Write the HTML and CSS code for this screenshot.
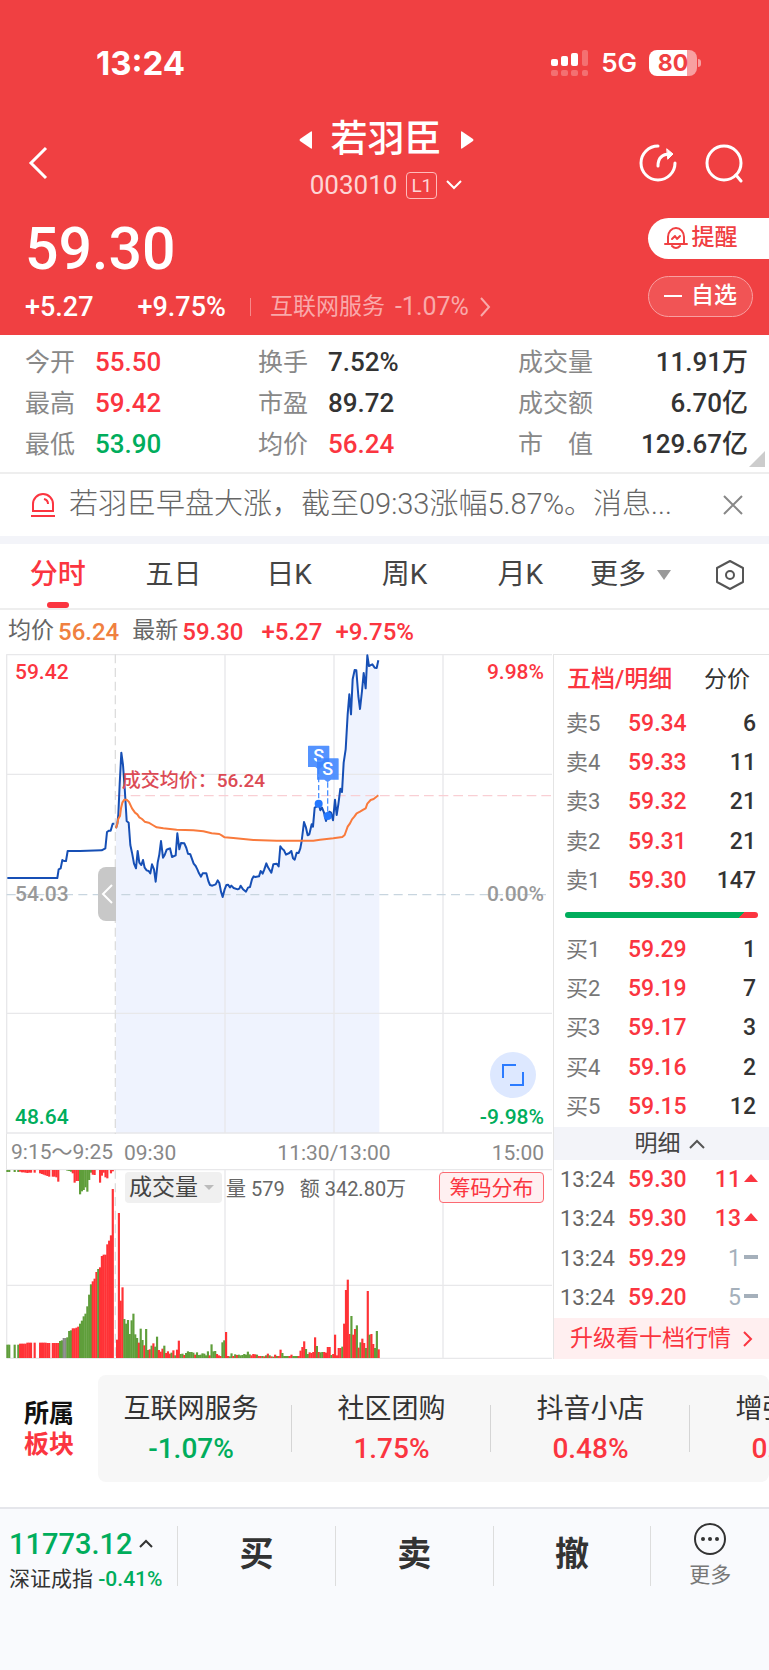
FILE: index.html
```html
<!DOCTYPE html>
<html lang="zh-CN">
<head>
    <meta charset="UTF-8">
    <meta name="viewport" content="width=device-width, initial-scale=1.0">
    <title>若羽臣 003010</title>
    <link rel="stylesheet" href="styles.css">
</head>
<body>
    <header class="header">
        <div class="status">
            <span class="clock">13:24</span>
            <div class="status_right">
                <svg width="38" height="26" viewBox="0 0 38 26" fill="#fff">
                    <rect x="0" y="9" width="7" height="7" rx="2"/>
                    <rect x="10" y="6" width="7" height="10" rx="2"/>
                    <rect x="20" y="3" width="7" height="13" rx="2"/>
                    <rect x="31" y="0" width="6" height="16" rx="2" opacity=".25"/>
                    <g opacity=".25">
                        <rect x="0" y="20" width="7" height="6" rx="2"/>
                        <rect x="10" y="20" width="7" height="6" rx="2"/>
                        <rect x="20" y="20" width="7" height="6" rx="2"/>
                        <rect x="31" y="20" width="6" height="6" rx="2"/>
                    </g>
                </svg>
                <span class="net">5G</span>
                <span class="battery">80</span>
            </div>
        </div>

        <div class="titlebar">
            <button class="icon_btn" aria-label="返回">
                <svg width="22" height="34" viewBox="0 0 22 34" fill="none" stroke="#fff" stroke-width="3"><path d="M19 2 4 17l15 15"/></svg>
            </button>
            <div class="title">
                <div class="name_row">
                    <button class="icon_btn" aria-label="上一只"><svg width="14" height="18" viewBox="0 0 14 18" fill="#fff"><path d="M13 1v16q0 1-1 .5L1 10q-1-1 0-2L12 .5q1-.5 1 .5z"/></svg></button>
                    <h1>若羽臣</h1>
                    <button class="icon_btn" aria-label="下一只"><svg width="14" height="18" viewBox="0 0 14 18" fill="#fff"><path d="M1 1v16q0 1 1 .5L13 10q1-1 0-2L2 .5q-1-.5-1 .5z"/></svg></button>
                </div>
                <button class="code_row">
                    <span>003010</span>
                    <span class="level">L1</span>
                    <svg width="16" height="10" viewBox="0 0 16 10" fill="none" stroke="#fff" stroke-width="2"><path d="m1 1 7 7 7-7"/></svg>
                </button>
            </div>
            <div class="tools">
                <button class="icon_btn" aria-label="分享">
                    <svg width="40" height="40" viewBox="0 0 40 40" fill="none" stroke="#fff" stroke-width="3" stroke-linecap="round" stroke-linejoin="round">
                        <path d="M20 3a17 17 0 1 0 17 17"/>
                        <path d="M20 23c0-8 4-12 12-12"/>
                        <path d="m29 6 6 5-5 5z" fill="#fff" stroke-width="1"/>
                    </svg>
                </button>
                <button class="icon_btn" aria-label="搜索">
                    <svg width="40" height="40" viewBox="0 0 40 40" fill="none" stroke="#fff" stroke-width="3" stroke-linecap="round">
                        <circle cx="19" cy="20" r="17"/><path d="m31 32 5 6"/>
                    </svg>
                </button>
            </div>
        </div>

        <div class="quote">
            <div>
                <div class="price">59.30</div>
                <div class="change">
                    <span>+5.27</span>
                    <span>+9.75%</span>
                    <a href="#industry" class="industry">互联网服务 <span>-1.07%</span>
                        <svg width="12" height="20" viewBox="0 0 12 20" fill="none" stroke="currentColor" stroke-width="2"><path d="m2 1 8 9-8 9"/></svg>
                    </a>
                </div>
            </div>
            <div class="pills">
                <button class="pill remind">
                    <svg width="24" height="24" viewBox="0 0 24 24" fill="none" stroke="currentColor" stroke-width="2" stroke-linecap="round" stroke-linejoin="round">
                        <path d="M4 18v-7a8 9 0 0 1 16 0v7M1 18h22M8 20q4 4 8 0"/><path d="m8 13 3-3 2 3 3-3"/>
                    </svg>提醒
                </button>
                <button class="pill watch">
                    <svg width="18" height="4" viewBox="0 0 18 4"><path d="M0 2h18" stroke="#fff" stroke-width="2"/></svg>自选
                </button>
            </div>
        </div>
    </header>

    <section class="stats">
        <dl>
            <div><dt>今开</dt><dd class="up">55.50</dd></div>
            <div><dt>最高</dt><dd class="up">59.42</dd></div>
            <div><dt>最低</dt><dd class="down">53.90</dd></div>
        </dl>
        <dl>
            <div><dt>换手</dt><dd>7.52%</dd></div>
            <div><dt>市盈</dt><dd>89.72</dd></div>
            <div><dt>均价</dt><dd class="up">56.24</dd></div>
        </dl>
        <dl class="totals">
            <div><dt>成交量</dt><dd>11.91万</dd></div>
            <div><dt>成交额</dt><dd>6.70亿</dd></div>
            <div><dt>市　值</dt><dd>129.67亿</dd></div>
        </dl>
    </section>

    <div class="news">
        <svg width="26" height="26" viewBox="0 0 26 26" fill="none" stroke="#fb3540" stroke-width="2">
            <path d="M3 19v-7a10 10 0 0 1 20 0v7zM1 24h24"/><path d="M14 7q4 1 4 5"/>
        </svg>
        <a href="#news">若羽臣早盘大涨，截至09:33涨幅5.87%。消息...</a>
        <button class="icon_btn" aria-label="关闭">
            <svg width="20" height="20" viewBox="0 0 20 20" stroke="#888" stroke-width="2"><path d="m1 1 18 18M19 1 1 19"/></svg>
        </button>
    </div>

    <nav class="tabs">
        <button class="tab active">分时</button>
        <button class="tab">五日</button>
        <button class="tab">日K</button>
        <button class="tab">周K</button>
        <button class="tab">月K</button>
        <button class="tab_more">更多<svg width="14" height="10" viewBox="0 0 14 10"><path d="M0 0h14L7 10z" fill="#999"/></svg></button>
        <button class="icon_btn tab_set" aria-label="设置">
            <svg width="30" height="30" viewBox="0 0 30 30" fill="none" stroke="#555" stroke-width="2" stroke-linejoin="round">
                <path d="M15 1 28 8v14l-13 7-13-7V8z"/><circle cx="15" cy="15" r="4"/>
            </svg>
        </button>
    </nav>

    <div class="summary">
        <span>均价</span><b class="avg">56.24</b>
        <span>最新</span><b>59.30</b>
        <b class="diff">+5.27</b>
        <b>+9.75%</b>
    </div>

    <main class="board">
        <div class="charts">
            <div class="price_chart">
                <svg viewBox="0 39 1659 1440">
                    <path class="area" d="M348 1476V562L352 548 355 520 359 430 364 335 369 372 374 440 380 540 386 545 391 612 396 635 402 668 408 682 413 630 418 665 424 672 429 657 434 680 440 688 446 690 451 697 456 670 462 685 467 722 473 665 478 640 483 600 489 650 494 642 500 626 510 622 516 648 527 643 532 577 538 625 543 606 553 607 559 621 564 638 571 640 581 668 592 685 603 707 608 697 619 697 630 732 647 730 653 718 658 726 668 768 674 745 679 732 713 745 722 734 738 752 750 738 761 706 777 706 799 667 814 695 820 670 836 676 841 616 858 641 874 630 884 656 890 635 901 622 912 543 923 583 935 550 944 500 956 488 966 500 978 540 988 512 999 538 1005 476 1010 522 1021 443 1026 453 1031 365 1037 325 1043 220 1048 160 1053 220 1058 115 1064 87 1069 88 1080 204 1091 96 1097 142 1102 43 1107 75 1130 81 1138 58V1476z"/>
                    <path class="grid" d="M20 41H1656M20 400H1656M20 1117H1656M20 1476H1656M20 40V1479M675 40V1476M1002 40V1476M1329 40V1476"/>
                    <path class="session" d="M346 40V1479"/>
                    <path class="zero" d="M20 761H1650"/>
                    <path class="cost" d="M348 464H1656"/>
                    <polyline class="line" points="22,711 172,711 176,685 182,682 187,657 192,660 198,660 203,630 240,630 305,628 316,622 321,573 327,569 332,569 338,548 343,548"/>
                    <polyline class="line" points="348,562 352,548 355,520 359,430 364,335 369,372 374,440 380,540 386,545 391,612 396,635 402,668 408,682 413,630 418,665 424,672 429,657 434,680 440,688 446,690 451,697 456,670 462,685 467,722 473,665 478,640 483,600 489,650 494,642 500,626 505,624 510,622 516,648 527,643 532,577 538,625 543,606 553,607 559,621 564,638 571,640 581,668 587,675 592,685 597,697 603,707 608,697 619,697 625,720 630,732 637,734 647,730 653,718 658,726 663,752 668,768 674,745 679,732 684,731 690,739 694,734 701,741 713,745 718,743 722,734 729,745 738,752 744,740 750,738 756,715 761,706 766,708 777,706 782,690 788,698 793,685 799,667 804,679 814,695 820,670 830,668 836,676 841,616 847,624 852,628 858,641 868,636 874,630 879,652 884,656 890,635 896,636 901,622 905,600 912,543 918,560 923,583 928,580 935,550 939,557 944,500 950,497 956,488 961,508 966,500 972,515 978,540 983,525 988,512 993,515 999,538 1005,476 1010,522 1015,490 1021,443 1026,453 1031,365 1037,325 1043,220 1048,160 1053,220 1058,115 1064,87 1069,88 1075,165 1080,204 1086,150 1091,96 1097,142 1102,43 1107,75 1117,70 1124,80 1130,81 1135,58"/>
                    <polyline class="line mean" points="348,562 352,548 355,533 360,525 363,502 367,485 373,476 380,476 387,483 396,502 405,515 412,520 418,529 426,534 434,542 446,545 458,552 470,559 490,562 530,566 580,568 610,571 635,577 658,579 665,583 674,589 700,591 760,597 830,599 940,599 960,596 1000,592 1027,588 1034,582 1043,557 1050,547 1056,535 1063,527 1070,517 1080,512 1090,506 1097,502 1102,488 1112,477 1121,474 1135,463"/>
                    <g class="trade">
                        <path class="stem" d="M956 384V478M983 424V516"/>
                        <circle cx="956" cy="488" r="12"/>
                        <circle cx="983" cy="525" r="12"/>
                        <path class="flag" d="M926 314H986Q988 314 988 316V378H966L956 386 946 378H924V316Q924 314 926 314z"/>
                        <text x="956" y="364">S</text>
                        <path class="flag" d="M953 352H1014Q1016 352 1016 354V416H993L983 424 973 416H951V354Q951 352 953 352z"/>
                        <text x="983" y="403">S</text>
                    </g>
                </svg>
                <span class="label top left up">59.42</span>
                <span class="label top right up">9.98%</span>
                <span class="label middle left">54.03</span>
                <span class="label middle right">0.00%</span>
                <span class="label bottom left down">48.64</span>
                <span class="label bottom right down">-9.98%</span>
                <span class="cost_label">成交均价：56.24</span>
                <button class="collapse" aria-label="收起竞价">
                    <svg width="12" height="20" viewBox="0 0 12 20" fill="none" stroke="#fff" stroke-width="2"><path d="m11 1-9 9 9 9"/></svg>
                </button>
                <button class="expand" aria-label="全屏">
                    <svg width="22" height="22" viewBox="0 0 22 22" fill="none" stroke="#2b7bff" stroke-width="2"><path d="M1 14V1h13M8 21h13V8"/></svg>
                </button>
            </div>
            <div class="axis">
                <span class="auction">9:15～9:25</span>
                <div class="session_times"><span>09:30</span><span>11:30/13:00</span><span>15:00</span></div>
            </div>
            <div class="volume_chart">
                <svg viewBox="0 54 1659 570">
                    <path class="grid" d="M20 56H1656M20 403H1656M20 622H1656M20 54V622M675 56V622M1002 56V622M1329 56V622"/>
                    <path class="session" d="M346 56V622"/>
                    <g id="bars"></g>
                </svg>
                <div class="volume_bar">
                    <label class="indicator">
                        <select aria-label="指标"><option>成交量</option><option>MACD</option></select>
                    </label>
                    <span>量 579</span>
                    <span class="amount">额 342.80万</span>
                    <button class="chips">筹码分布</button>
                </div>
            </div>
        </div>

        <aside class="depth">
            <div class="depth_tabs">
                <button class="on">五档/明细</button>
                <button>分价</button>
            </div>
            <table class="orders">
                <tr><th>卖5</th><td class="up">59.34</td><td>6</td></tr>
                <tr><th>卖4</th><td class="up">59.33</td><td>11</td></tr>
                <tr><th>卖3</th><td class="up">59.32</td><td>21</td></tr>
                <tr><th>卖2</th><td class="up">59.31</td><td>21</td></tr>
                <tr><th>卖1</th><td class="up">59.30</td><td>147</td></tr>
            </table>
            <div class="ratio"></div>
            <table class="orders">
                <tr><th>买1</th><td class="up">59.29</td><td>1</td></tr>
                <tr><th>买2</th><td class="up">59.19</td><td>7</td></tr>
                <tr><th>买3</th><td class="up">59.17</td><td>3</td></tr>
                <tr><th>买4</th><td class="up">59.16</td><td>2</td></tr>
                <tr><th>买5</th><td class="up">59.15</td><td>12</td></tr>
            </table>
            <button class="detail">明细
                <svg width="16" height="10" viewBox="0 0 16 10" fill="none" stroke="#555" stroke-width="2"><path d="m1 9 7-7 7 7"/></svg>
            </button>
            <table class="ticks">
                <tr><th>13:24</th><td class="up">59.30</td><td class="up">11<i class="rise"></i></td></tr>
                <tr><th>13:24</th><td class="up">59.30</td><td class="up">13<i class="rise"></i></td></tr>
                <tr><th>13:24</th><td class="up">59.29</td><td class="flat">1<i class="dash"></i></td></tr>
                <tr><th>13:24</th><td class="up">59.20</td><td class="flat">5<i class="dash"></i></td></tr>
            </table>
            <a href="#level2" class="upgrade">升级看十档行情
                <svg width="10" height="16" viewBox="0 0 10 16" fill="none" stroke="currentColor" stroke-width="2"><path d="m1 1 7 7-7 7"/></svg>
            </a>
        </aside>
    </main>

    <section class="sectors">
        <h2>所属<span>板块</span></h2>
        <div class="sector_list">
            <a href="#s1">互联网服务<b class="down">-1.07%</b></a>
            <a href="#s2">社区团购<b class="up">1.75%</b></a>
            <a href="#s3">抖音小店<b class="up">0.48%</b></a>
            <a href="#s4">增强现实<b class="up">0.66%</b></a>
        </div>
    </section>

    <footer class="footer">
        <button class="index">
            <span class="index_value">11773.12
                <svg width="14" height="10" viewBox="0 0 14 10" fill="none" stroke="#333" stroke-width="2"><path d="m1 8 6-6 6 6"/></svg>
            </span>
            <span class="index_name">深证成指 <b class="down">-0.41%</b></span>
        </button>
        <button class="action">买</button>
        <button class="action">卖</button>
        <button class="action">撤</button>
        <button class="more">
            <svg width="34" height="34" viewBox="0 0 34 34" fill="none" stroke="#333" stroke-width="2">
                <circle cx="17" cy="17" r="15"/>
                <g fill="#333" stroke="none"><circle cx="10" cy="17" r="2"/><circle cx="17" cy="17" r="2"/><circle cx="24" cy="17" r="2"/></g>
            </svg>
            更多
        </button>
    </footer>

    <script>
        const bars = document.getElementById('bars');
        const colors = { r: '#ff3236', g: '#5f9e3b', k: '#8a8a8a' };
        const step = 5.45;

        // r = up, g = down, k = unchanged, - = no trade
        const auction = 'g40 g40 - - g40 - g40 r43 r43 r43 r43 r46 r46 r46 - r46 - - r46 r46 r46 r46 r45 r45 - r45 r45 r45 r45 g51 g53 k60 k60 g62 g81 g83 r89 r89 r91 r94 g103 g112 g125 g133 g155 g190 g221 r230 r238 r258 g267 r272 r306 r310 r310 r341 r352 r368 r507';
        const unmatched = 'g6 g6 - - g6 - g6 r5 r7 r7 r8 r9 r8 r8 - r8 - - r10 r12 r14 r16 r18 r20 - r20 r20 r22 r35 - - - - g2 g3 g5 r10 r38 r33 r33 g73 g64 g60 g52 g65 g30 g8 r14 r15 - - r38 r17 r8 r22 r25 - r10 r4';
        const minutes = 'r55 r435 r172 r212 g117 g103 g114 g72 g113 g133 g71 g60 r46 g88 g54 r38 g87 g24 r26 g37 r44 g34 g64 r24 r19 r28 g37 r15 r20 r13 g16 r23 g8 r25 r52 g12 g13 r9 g15 g20 g18 g18 g16 r10 g17 g9 g10 g14 g13 g8 g20 r8 g41 g20 g21 r12 r8 r6 g47 g53 r78 r6 g5 g14 r6 g11 r9 g10 g8 g9 g12 g10 g19 g11 r8 r12 r11 g10 r6 r6 g6 r5 g8 r13 g8 r5 g4 r10 g6 r6 r25 g15 g6 g6 g6 r6 r10 g6 g6 g6 r6 r22 r33 r50 g27 g12 r17 r15 r18 r62 g36 r18 g17 g18 r18 r16 r33 r33 g9 r12 r70 r8 r30 r30 g34 r103 r204 r235 r72 g126 r70 r87 g98 r31 g47 r58 r45 g30 r201 g70 r72 r42 g30 g81 r26';

        function drawBars(data, startX, fromTop) {
            data.split(' ').forEach((item, i) => {
                if (item === '-') return;
                const height = Number(item.slice(1));
                const rect = document.createElementNS('http://www.w3.org/2000/svg', 'rect');
                rect.setAttribute('x', startX + i * step);
                rect.setAttribute('y', fromTop ? 57 : 621 - height);
                rect.setAttribute('width', 6.5);
                rect.setAttribute('height', height);
                rect.setAttribute('fill', colors[item[0]]);
                bars.appendChild(rect);
            });
        }

        drawBars(auction, 19, false);
        drawBars(unmatched, 19, true);
        drawBars(minutes, 348, false);
    </script>
</body>
</html>
```

FILE: styles.css
```css
* {
    box-sizing: border-box;
}

body {
    margin: 0;
    font-family: Roboto, "Noto Sans CJK SC", sans-serif;
    color: #333;
    background: #fff;
    overflow-x: hidden;
}

button, select {
    font: inherit;
    color: inherit;
    background: none;
    border: none;
    padding: 0;
    cursor: pointer;
}

a {
    color: inherit;
    text-decoration: none;
}

b {
    font-weight: 500;
}

svg {
    display: block;
    flex: none;
}

.up {
    color: #fb3540;
}

.down {
    color: #00ad5c;
}

.icon_btn {
    display: flex;
}

/* header */
.header {
    background: #f04042;
    color: #fff;
}

.status {
    display: flex;
    align-items: center;
    justify-content: space-between;
    height: 115px;
    padding: 10px 72px 0 96px;
    font-family: Inter, sans-serif;
}

.clock {
    font-size: 33px;
    font-weight: 700;
}

.status_right {
    display: flex;
    align-items: center;
    gap: 12px;
}

.net {
    font-size: 26px;
    font-weight: 600;
}

.battery {
    position: relative;
    width: 48px;
    line-height: 26px;
    border-radius: 8px;
    background: linear-gradient(90deg, #fff 80%, #f8a0a1 80%);
    color: #f04042;
    font-size: 23px;
    font-weight: 700;
    text-align: center;
}

.battery::after {
    content: "";
    position: absolute;
    left: 49px;
    top: 9px;
    width: 3px;
    height: 8px;
    border-radius: 0 3px 3px 0;
    background: #f8a0a1;
}

.titlebar {
    display: grid;
    grid-template-columns: 1fr auto 1fr;
    align-items: center;
    height: 96px;
    padding: 0 24px 0 27px;
}

.title {
    display: flex;
    flex-direction: column;
    align-items: center;
    align-self: start;
}

.name_row {
    display: flex;
    align-items: center;
    gap: 18px;
}

h1 {
    margin: 0;
    font-size: 37px;
    line-height: 50px;
    font-weight: 500;
}

.code_row {
    display: flex;
    align-items: center;
    gap: 9px;
    font-size: 26px;
    line-height: 40px;
    color: #fdd5d5;
}

.level {
    padding: 0 4px;
    border: 1px solid #fbb;
    border-radius: 4px;
    font-size: 19px;
    line-height: 25px;
}

.tools {
    display: flex;
    justify-content: flex-end;
    gap: 27px;
}

.quote {
    display: flex;
    justify-content: space-between;
    padding: 0 0 8px 25px;
}

.price {
    font-size: 59px;
    line-height: 76px;
    font-weight: 500;
}

.change {
    display: flex;
    gap: 44px;
    font-size: 27px;
    line-height: 40px;
    font-weight: 500;
}

.industry {
    display: flex;
    align-items: center;
    gap: 10px;
    position: relative;
    font-size: 23px;
    font-weight: 400;
    color: #f9a9aa;
}

.industry span {
    font-size: 25px;
}

.industry::before {
    content: "";
    position: absolute;
    left: -20px;
    width: 1px;
    height: 18px;
    background: #f7898a;
}

.pills {
    display: flex;
    flex-direction: column;
    gap: 17px;
    margin-top: 7px;
}

.pill {
    display: flex;
    align-items: center;
    justify-content: center;
    height: 41px;
    padding-bottom: 2px;
    font-size: 23px;
    line-height: 34px;
    font-weight: 500;
}

.remind {
    gap: 4px;
    width: 121px;
    padding-right: 16px;
    border-radius: 21px 0 0 21px;
    background: #fff;
    color: #f04042;
}

.watch {
    gap: 9px;
    width: 105px;
    border: 1px solid #f8a0a1;
    border-radius: 21px;
    background: #f15455;
}

/* key figures */
.stats {
    position: relative;
    display: grid;
    grid-template-columns: 233px 1fr 230px;
    padding: 7px 21px 7px 25px;
    border-bottom: 2px solid #eee;
}

.stats::after {
    content: "";
    position: absolute;
    right: 4px;
    bottom: 5px;
    border-left: 16px solid transparent;
    border-bottom: 16px solid #ccc;
}

.stats dl {
    margin: 0;
}

.stats dl div {
    display: flex;
    gap: 20px;
    font-size: 25px;
    line-height: 41px;
}

.stats dt {
    color: #888;
}

.stats dd {
    margin: 0;
    font-size: 26px;
    font-weight: 500;
}

.stats .totals div {
    justify-content: space-between;
}

/* news */
.news {
    display: flex;
    align-items: center;
    height: 70px;
    padding: 0 26px 0 30px;
    border-bottom: 8px solid #f3f4f9;
    font-size: 29px;
    line-height: 42px;
    color: #666;
}

.news a {
    flex: 1;
    margin-left: 13px;
    padding-bottom: 3px;
    font-weight: 300;
    white-space: nowrap;
    overflow: hidden;
    text-overflow: ellipsis;
}

/* period tabs */
.tabs {
    display: flex;
    align-items: center;
    height: 66px;
    border-bottom: 2px solid #eee;
    font-size: 28px;
    line-height: 40px;
    color: #444;
}

.tab {
    position: relative;
    flex: 3;
    height: 64px;
    padding-bottom: 2px;
}

.tab.active {
    color: #fb3540;
    font-weight: 500;
}

.tab.active::after {
    content: "";
    position: absolute;
    left: calc(50% - 11px);
    bottom: 0;
    width: 22px;
    height: 6px;
    border-radius: 3px;
    background: #fb3540;
}

.tab_more {
    display: flex;
    align-items: center;
    gap: 11px;
    margin-left: 12px;
    padding-bottom: 2px;
}

.tab_set {
    margin: 0 24px 0 44px;
    padding-bottom: 2px;
}

.summary {
    display: flex;
    align-items: center;
    gap: 4px;
    height: 44px;
    padding: 0 8px;
    font-size: 24px;
    line-height: 36px;
    color: #fb3540;
}

.summary span {
    padding-bottom: 2px;
    font-size: 23px;
    color: #666;
}

.summary b {
    margin-right: 9px;
}

.summary .avg {
    color: #f08040;
}

.summary .diff {
    margin-left: 5px;
}

/* charts */
.board {
    display: flex;
}

.charts {
    flex: 1;
    min-width: 0;
}

.price_chart, .volume_chart {
    position: relative;
}

.price_chart > svg, .volume_chart > svg {
    width: 100%;
}

.area {
    fill: #eff3fe;
}

.grid {
    fill: none;
    stroke: #e8e8ea;
    stroke-width: 4;
}

.session {
    stroke: #ddd;
    stroke-width: 4;
    stroke-dasharray: 27 14;
}

.zero {
    stroke: #c8d5df;
    stroke-width: 4;
    stroke-dasharray: 27 16;
}

.cost {
    stroke: #f9cfd4;
    stroke-width: 4;
    stroke-dasharray: 29 15;
}

.line {
    fill: none;
    stroke: #164fb5;
    stroke-width: 6;
    stroke-linejoin: round;
}

.mean {
    stroke: #f97a3c;
}

.trade {
    fill: #2478ff;
}

.trade .stem {
    stroke: #4d92ff;
    stroke-width: 4;
    stroke-dasharray: 16 8;
}

.trade .flag {
    fill: #3c84ff;
    fill-opacity: .88;
}

.trade text {
    fill: #fff;
    font-size: 54px;
    font-weight: 500;
    text-anchor: middle;
}

.label {
    position: absolute;
    font-size: 21px;
    line-height: 24px;
    font-weight: 500;
}

.label.left {
    left: 15px;
}

.label.right {
    right: 9px;
}

.label.top {
    top: 6px;
}

.label.bottom {
    bottom: 5px;
}

.label.middle {
    top: calc(50% - 12px);
    color: #999;
}

.cost_label {
    position: absolute;
    left: 22%;
    top: 24%;
    font-size: 19px;
    line-height: 24px;
    font-weight: 500;
    color: #dc4a54;
}

.collapse {
    position: absolute;
    left: 98px;
    top: calc(50% - 27px);
    width: 18px;
    height: 54px;
    padding-left: 3px;
    border-radius: 8px 0 0 8px;
    background: #c8c8c8;
}

.expand {
    position: absolute;
    right: 17px;
    bottom: 36px;
    display: flex;
    align-items: center;
    justify-content: center;
    width: 46px;
    height: 46px;
    border-radius: 50%;
    background: #dde8ff;
}

.axis {
    display: flex;
    align-items: center;
    height: 35px;
    margin-left: 6px;
    padding: 2px 9px 0 4px;
    border-left: 1px solid #e4e4e4;
    font-size: 21px;
    line-height: 24px;
    color: #888;
}

.auction {
    width: 113px;
    padding-bottom: 2px;
    white-space: nowrap;
}

.session_times {
    flex: 1;
    display: flex;
    justify-content: space-between;
}

.volume_bar {
    position: absolute;
    top: 3px;
    left: 125px;
    right: 9px;
    display: flex;
    align-items: center;
    gap: 4px;
    font-size: 20px;
    color: #666;
}

.indicator {
    display: flex;
    align-items: center;
    width: 97px;
    height: 31px;
    border-radius: 4px;
    background: #f0f0f0;
}

.indicator select {
    appearance: none;
    width: 75px;
    padding-left: 4px;
    font-size: 23px;
    line-height: 31px;
    color: #444;
}

.indicator::after {
    content: "";
    margin-left: 4px;
    border: 5px solid transparent;
    border-top-color: #bbb;
    border-bottom: 0;
}

.amount {
    margin-left: 11px;
}

.chips {
    width: 105px;
    height: 31px;
    margin-left: auto;
    border: 1px solid #fb6a72;
    border-radius: 4px;
    background: #fff0f1;
    color: #fb3540;
    font-size: 21px;
    line-height: 24px;
}

/* order book */
.depth {
    display: flex;
    flex-direction: column;
    width: 216px;
    border-left: 1px solid #e4e4e4;
    border-top: 1px solid #e4e4e4;
}

.depth_tabs {
    display: flex;
    justify-content: space-between;
    height: 49px;
    padding: 0 19px 6px 13px;
    font-size: 23px;
}

.depth_tabs .on {
    font-size: 24px;
    font-weight: 500;
    color: #fb3540;
}

.depth table {
    width: 100%;
    border-collapse: collapse;
    font-size: 23px;
    line-height: 26px;
}

.orders {
    height: 197px;
}

.ticks {
    height: 158px;
}

.depth th, .depth td {
    padding: 0;
    text-align: left;
    font-weight: 500;
}

.depth th {
    width: 74px;
    padding-left: 12px;
    font-size: 22px;
    font-weight: 400;
    color: #777;
}

.depth .ticks th {
    padding-left: 6px;
    color: #666;
}

.depth td:last-child {
    padding-right: 13px;
    text-align: right;
}

.depth .ticks td:last-child {
    padding-right: 11px;
}

.depth .flat {
    color: #a5b0bb;
    font-weight: 400;
}

.ticks i {
    display: inline-block;
    margin: 0 0 6px 3px;
    vertical-align: middle;
}

.rise {
    border: 7px solid transparent;
    border-bottom: 8px solid #fb3540;
    border-top: 0;
}

.dash {
    width: 14px;
    height: 4px;
    background: #a5b0bb;
}

.ratio {
    height: 6px;
    margin: 11px 11px 12px;
    border-radius: 3px;
    background: linear-gradient(135deg, #00ad5c 90%, #fb3540 90%);
}

.detail {
    display: flex;
    align-items: center;
    justify-content: center;
    gap: 8px;
    height: 33px;
    padding-left: 16px;
    background: #f3f4f9;
    font-size: 23px;
    line-height: 32px;
    color: #444;
}

.upgrade {
    flex: 1;
    display: flex;
    align-items: center;
    justify-content: center;
    gap: 12px;
    background: #ffeff0;
    color: #fb3540;
    font-size: 23px;
    line-height: 38px;
}

/* sectors */
.sectors {
    display: flex;
    align-items: center;
    padding-top: 16px;
}

.sectors h2 {
    width: 98px;
    margin: 0;
    text-align: center;
    font-size: 25px;
    line-height: 31px;
    font-weight: 700;
    color: #111;
}

.sectors h2 span {
    display: block;
    color: #fb3540;
}

.sector_list {
    flex: 1;
    display: flex;
    align-items: center;
    height: 107px;
    border-radius: 8px;
    background: #f7f7f7;
    overflow: hidden;
}

.sector_list a {
    position: relative;
    flex: none;
    width: 199px;
    text-align: center;
    font-size: 27px;
    line-height: 40px;
}

.sector_list a:first-child {
    width: 194px;
    padding-right: 8px;
}

.sector_list a:not(:last-child)::after {
    content: "";
    position: absolute;
    right: 0;
    top: 16px;
    width: 1px;
    height: 47px;
    background: #d5d5d5;
}

.sector_list b {
    display: block;
    font-size: 28px;
}

/* bottom bar */
.footer {
    display: flex;
    height: 163px;
    margin-top: 25px;
    padding-top: 17px;
    border-top: 2px solid #e5e6eb;
    background: #f9fafd;
}

.footer > button {
    height: 60px;
}

.footer .index {
    width: 177px;
    padding-left: 9px;
    text-align: left;
}

.index_value {
    display: flex;
    align-items: center;
    gap: 7px;
    font-size: 29px;
    line-height: 36px;
    font-weight: 500;
    color: #00ad5c;
}

.index_name {
    display: block;
    font-size: 21px;
    line-height: 34px;
    white-space: nowrap;
}

.footer .action {
    flex: 4;
    padding-bottom: 5px;
    border-left: 1px solid #ddd;
    font-size: 34px;
    line-height: 48px;
    font-weight: 700;
}

.more {
    display: flex;
    flex-direction: column;
    align-items: center;
    justify-content: center;
    gap: 4px;
    flex: 3;
    border-left: 1px solid #ddd;
    font-size: 21px;
    line-height: 30px;
    color: #777;
}
```
